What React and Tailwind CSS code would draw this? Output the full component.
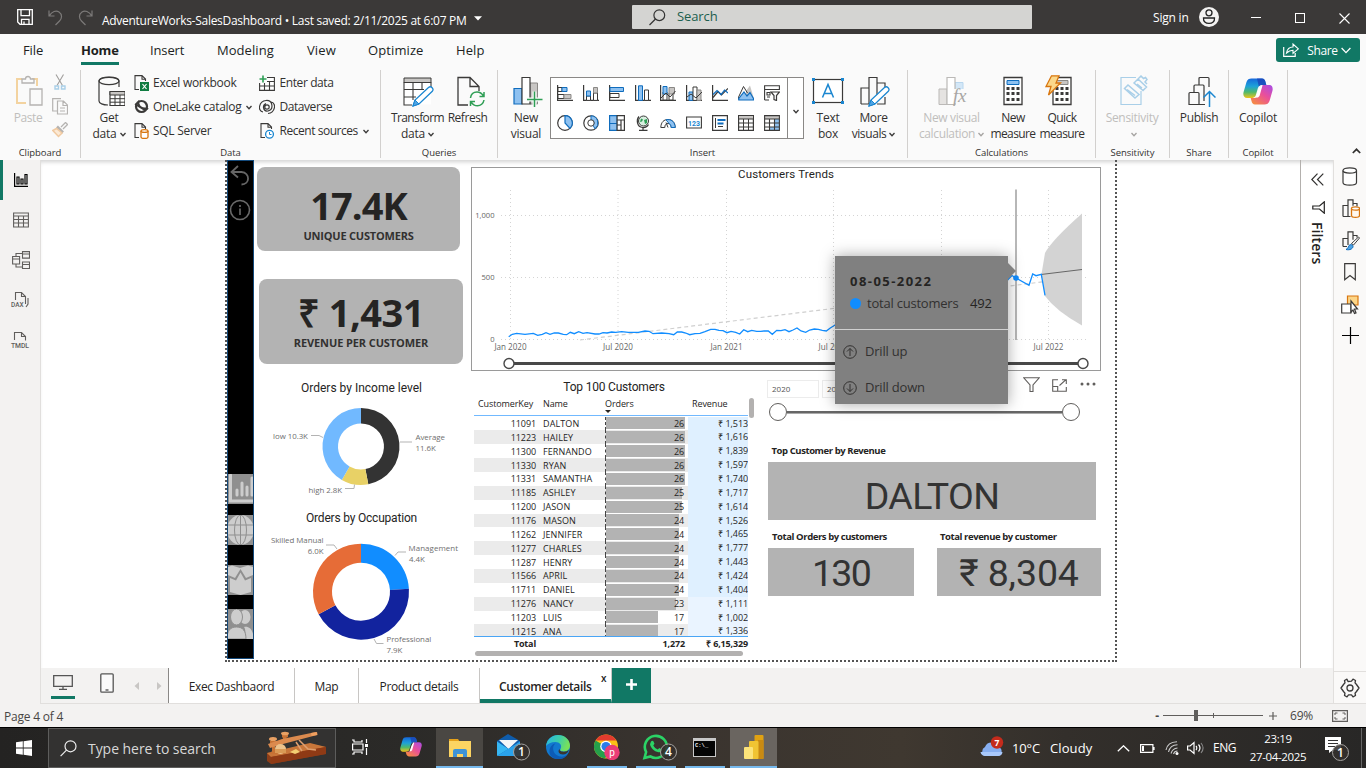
import React from "react";

const INK = "#3b3a39";
const BLUE = "#0f6cbd";
const LB = "#8ec1f0";

function Svg({ w, h, children, className = "", ...rest }) {
  return (
    <svg width={w} height={h} viewBox={`0 0 ${w} ${h}`} fill="none" className={"block shrink-0 " + className} {...rest}>
      {children}
    </svg>
  );
}

function Chev({ color = INK, w = 6, className = "" }) {
  return (
    <Svg w={w} h={5} className={"inline-block " + className}>
      <path d={`M.5 1 L${w / 2} 3.8 L${w - 0.5} 1`} stroke={color} strokeWidth="1.3" />
    </Svg>
  );
}

/* ---------- Title bar ---------- */
function TitleBar() {
  return (
    <div className="flex h-[34px] items-center bg-[#3b3938] text-white">
      <Svg w={16} h={16} className="ml-[17px]">
        <path d="M.7 .7h14.6v14.6H3L.7 13z M4 .7v6h8.5v-6 M4.5 15.3v-5h7.5v5 M7 12.5v3" stroke="#fff" strokeWidth="1.3" />
      </Svg>
      <Svg w={15} h={17} className="ml-[15px]">
        <path d="M1 1.5v5.5h5.5 M1.2 6.8C4 2.5 8 1 11 3c3.600 2.500 3 6.500 .5 9L7.500 16" stroke="#7c7a79" strokeWidth="1.2" />
      </Svg>
      <Svg w={15} h={17} className="ml-[15px]">
        <path d="M14 1.5v5.500H8.500 M13.800 6.800C11 2.500 7 1 4 3C.4 5.500 1 9.500 3.500 12L7.500 16" stroke="#7c7a79" strokeWidth="1.2" />
      </Svg>
      <span className="ml-[9px] mt-[8px] w-[366px] whitespace-nowrap text-[12px] font-medium leading-5 tracking-[-0.28px]">
        AdventureWorks-SalesDashboard&nbsp;• Last saved: 2/11/2025 at 6:07 PM
      </span>
      <Svg w={8} h={5} className="ml-[6px] mt-[2px]"><path d="M0 .3h8L4 4.600z" fill="#fff" /></Svg>
      <div className="ml-[150px] flex h-6 w-[400px] items-center rounded-[1px] bg-[#d4d4d2]">
        <Svg w={17} h={17} className="ml-[17px]">
          <circle cx="10.300" cy="6.200" r="5.400" stroke="#333" strokeWidth="1.200" />
          <path d="M6.500 10 .5 16" stroke="#333" strokeWidth="1.200" />
        </Svg>
        <span className="ml-[11px] text-[13px] tracking-[-0.1px] text-[#1b5e4e]">Search</span>
      </div>
      <span className="ml-[121px] mt-[2px] w-[46px] whitespace-nowrap text-[12px] tracking-[-0.2px]">Sign in</span>
      <Svg w={20} h={20}>
        <circle cx="10" cy="10" r="10" fill="#f3f2f1" />
        <circle cx="10" cy="5.800" r="3" stroke="#222" strokeWidth="1.300" />
        <path d="M4.500 11h11c.3 3.500-2 5.300-5.500 5.300S4.200 14.500 4.500 11z" stroke="#222" strokeWidth="1.300" />
      </Svg>
      <Svg w={10} h={12} className="ml-[32px]"><path d="M0 6.500h10" stroke="#fff" /></Svg>
      <Svg w={10} h={10} className="ml-[34px] mt-[2px]"><rect x=".5" y=".5" width="9" height="9" stroke="#fff" /></Svg>
      <Svg w={11} h={11} className="ml-[34px] mt-[2px]"><path d="M.5 .5l10 10M10.500 .5l-10 10" stroke="#fff" strokeWidth="1.100" /></Svg>
    </div>
  );
}

/* ---------- Ribbon tabs ---------- */
function RibbonTabs() {
  const cls = "h-8 shrink-0 leading-8";
  return (
    <div className="flex h-8 items-start bg-[#fafafa] pl-[23px] text-[13px] tracking-[-0.12px] text-[#201f1e]">
      <div className={cls + " w-[58px]"}>File</div>
      <div className={cls + " w-[69px]"}>
        <div className="h-[31px] w-[38px] border-b-[3px] border-[#117865] font-bold tracking-[-0.2px]">Home</div>
      </div>
      <div className={cls + " w-[67px]"}>Insert</div>
      <div className={cls + " w-[90px] tracking-[0.05px]"}>Modeling</div>
      <div className={cls + " w-[61px] tracking-[0.1px]"}>View</div>
      <div className={cls + " w-[88px] tracking-[0.1px]"}>Optimize</div>
      <div className={cls + " tracking-[0.1px]"}>Help</div>
      <button className="ml-auto mr-[6px] mt-[4px] flex h-6 w-[84px] items-center rounded-[3px] bg-[#117865] text-white">
        <Svg w={16} h={14} className="ml-[7px]">
          <path d="M.7 4v9.300h11.500V10" stroke="#fff" strokeWidth="1.200" />
          <path d="M3.500 10C4.200 6 7 4 10 4V1l5.300 4.800L10 10.300V7.200C7.500 7.200 5.500 8 3.500 10z" stroke="#fff" strokeWidth="1.100" />
        </Svg>
        <span className="ml-[8px] mt-px w-[31px] text-[12px] font-medium tracking-[-0.38px]">Share</span>
        <Svg w={10} h={7} className="ml-[3px]"><path d="M.6 1 5 5.600 9.400 1" stroke="#fff" strokeWidth="1.300" /></Svg>
      </button>
    </div>
  );
}

/* ---------- Ribbon icons ---------- */
const PasteIcon = () => (
  <Svg w={30} h={32} className="ml-[2px]">
    <path d="M12 28H3V4h5 M18 4h5v7" stroke="#f3d3a0" strokeWidth="2" />
    <path d="M8 8h12V4h-3.500a2.500 2.500 0 0 0-5 0H8z M16 14h12v16H16z" stroke="#b5b3b1" strokeWidth="1.300" fill="#fafafa" />
  </Svg>
);
const GetDataIcon = () => (
  <Svg w={28} h={32} className="ml-[3px]">
    <path d="M22 12V6c0-2.500-4.500-4-10-4S2 3.500 2 6v20c0 2.300 4 4 9 4" stroke={INK} strokeWidth="1.200" />
    <ellipse cx="12" cy="6" rx="10" ry="3.700" stroke={INK} strokeWidth="1.200" />
    <path d="M13 16.500h15v14H13z" fill="#fff" stroke={INK} strokeWidth="1.200" />
    <path d="M13 16.500h15v3.500H13z" fill="#c8c6c4" stroke={INK} />
    <path d="M13 23.700h15M13 27.200h15M18 20v10.500M23 20v10.500" stroke={INK} />
  </Svg>
);
const Pencil = ({ x = 0, y = 0 }) => (
  <g transform={`translate(${x} ${y})`}>
    <path d="M1 20l2-6L16.500 1.500a2.700 2.700 0 0 1 3.800 3.800L7 18z" fill="#fff" stroke="#1a86d0" strokeWidth="1.300" />
    <path d="M1 20l2-6 4 4z" fill="#50a5e6" stroke="#1a86d0" />
  </g>
);
const TransformIcon = () => (
  <Svg w={32} h={32} className="ml-[3px]">
    <path d="M1 2.500h27v27H1z" fill="#fff" />
    <path d="M1 3h27v4.500H1z" fill="#c8c6c4" stroke={INK} />
    <path d="M1 7v23h8 M28 7v5 M1 14.500h20M1 22h12M10 7v18M19 7v8" stroke={INK} strokeWidth="1.100" />
    <Pencil x={9} y={11} />
  </Svg>
);
const RefreshIcon = () => (
  <Svg w={28} h={32} className="ml-[6px]">
    <path d="M11 30H1V2.500h12l9 9V16 M13 2.500V11.500h9" stroke={INK} strokeWidth="1.300" fill="none" />
    <path d="M13.500 23c.5-4 3-6 6.500-6 3 0 5 1.500 6.500 4 M27 17v4.500h-4.500 M27 25c-.5 3.500-3.500 5.800-6.500 5.800-3 0-5-1.500-6.500-4 M13.500 31v-4.500H18" stroke="#2f9e55" strokeWidth="1.500" />
  </Svg>
);
const NewVisualIcon = () => (
  <Svg w={30} h={32} className="ml-[3px]">
    <path d="M1 13.500h8V29H1z" fill={LB} stroke={BLUE} strokeWidth="1.200" />
    <path d="M17 8h7.500v21H17z" fill="#c8c6c4" stroke="#8a8886" />
    <path d="M9 2.500h8V29H9z" fill="#fff" stroke={INK} strokeWidth="1.200" />
    <path d="M21.500 16.500v15.500M13.500 24.500h16" stroke="#fafafa" strokeWidth="4" />
    <path d="M14 24.500h15.500M21.500 16.500v15.500" stroke="#2f9e55" strokeWidth="1.500" />
  </Svg>
);
const TextBoxIcon = () => (
  <Svg w={32} h={32}>
    <rect x="1.500" y="4.500" width="29" height="23" fill="#fff" stroke={INK} strokeWidth="1.200" />
    <path d="M0 3h3v3H0zM29 3h3v3h-3zM0 26h3v3H0zM29 26h3v3h-3z" fill="#1a86d0" />
    <path d="M10.500 22.500 16 9.500l5.500 13M12.500 18.500h7" stroke="#1a86d0" strokeWidth="1.500" />
  </Svg>
);
const MoreVisualsIcon = () => (
  <Svg w={30} h={32} className="ml-[3px]">
    <path d="M1 29V13h8M9 29V2.500h8V20M1 29h8M17 8h8v4M25 22v7h-8" stroke={INK} strokeWidth="1.200" />
    <Pencil x={8} y={11} />
  </Svg>
);
const CalcFxIcon = () => (
  <Svg w={30} h={32} className="ml-[3px]">
    <path d="M17 7.500h8V18h-8z" fill="#d3e7f7" stroke="#b8d6ee" />
    <path d="M1 14h8v15.500H1z" fill="#e5e3e1" stroke="#bbb9b7" />
    <path d="M9 2.500h8v27H9z" fill="#fff" stroke="#bbb9b7" strokeWidth="1.200" />
    <path d="M15.500 14h13v14h-13z" fill="#fafafa" />
    <text x="15" y="27" fontFamily="Liberation Serif, serif" fontStyle="italic" fontSize="19" fill="#a8a6a4">fx</text>
  </Svg>
);
const CalcBody = ({ fill, stroke }) => (
  <>
    <path d="M1 2.500h18v27H1z" fill="#fff" stroke={INK} strokeWidth="1.300" />
    <path d="M4 5.500h12v4H4z" fill={fill} stroke={stroke} />
    <path d="M3.500 13.500h3M8.500 13.500h3M13.500 13.500h3M3.500 18.500h3M8.500 18.500h3M13.500 18.500h3M3.500 24.500h3M8.500 24.500h3M13.500 24.500h3" stroke={INK} strokeWidth="3" />
  </>
);
const MeasureIcon = () => <Svg w={20} h={32} className="-ml-[1px]"><CalcBody fill={LB} stroke={BLUE} /></Svg>;
const QuickIcon = () => (
  <Svg w={30} h={32} className="-ml-[6px]">
    <g transform="translate(8 0)"><CalcBody fill="#c8c6c4" stroke="#8a8886" /></g>
    <path d="M7.500 .8h7.500L12 8h4.500L4.500 20l2.500-8.500H2z" fill="#fbd88a" stroke="#d8750e" strokeWidth="1.300" />
  </Svg>
);
const SensitivityIcon = () => (
  <Svg w={28} h={32} className="ml-[4px]">
    <path d="M16 2.500H1v27h20V16" stroke="#a9cfe8" strokeWidth="1.200" />
    <path d="M4.500 13.500l3.500-3.500 11 9.500-4 3.500z M7 14.500l8 6" stroke="#a9cfe8" strokeWidth="1.500" />
    <path d="M14 8l4-4 8.500 8-3.500 3.500z M18 4l3-3 2.500 2.500 2-1 1.500 2-2 2.500 2 2M17 9l5 4" stroke="#a9cfe8" strokeWidth="1.500" />
  </Svg>
);
const PublishIcon = () => (
  <Svg w={28} h={32} className="ml-[6px]">
    <path d="M1 29.500V18.500q0-1 1-1h8q1 0 1 1v11z M6 17.500V11q0-1 1-1h4 M11 29.500h6 M16 26V11q0-1-1-1h-4V3.500q0-1 1-1h8q1 0 1 1V12" stroke={INK} strokeWidth="1.200" />
    <path d="M21.500 32V16.500M15.500 22.500l6-6 6 6" stroke="#1a86d0" strokeWidth="1.500" />
  </Svg>
);
function CopilotIcon({ size = 30, id }) {
  return (
    <svg width={size} height={size * 0.9} viewBox="0 0 30 27" className="block">
      <defs>
        <linearGradient id={id + "a"} x1="0" y1="0" x2="0" y2="1">
          <stop offset="0" stopColor="#1668dc" /><stop offset=".4" stopColor="#1da2d8" /><stop offset=".7" stopColor="#4fb96c" /><stop offset="1" stopColor="#f0c419" />
        </linearGradient>
        <linearGradient id={id + "b"} x1="1" y1="0" x2=".2" y2="1">
          <stop offset="0" stopColor="#a64de8" /><stop offset=".5" stopColor="#ea4f9a" /><stop offset="1" stopColor="#f58a45" />
        </linearGradient>
      </defs>
      <path d="M8.500 .5h10.500c2 0 3 1.500 3.500 3.500l.8 3H19c-3 0-3.700 2-4.500 4.500l-1.800 6C12 19.500 10 20 8 20H4c-3 0-4.300-2.500-3.400-6L3.500 4C4.300 1.500 6 .5 8.500 .5z" fill={`url(#${id}a)`} />
      <path d="M21.500 26.500H12c-2 0-3-1.500-3.500-3.500L7.700 20H11c3 0 3.700-2 4.500-4.500l1.800-6C18 7.500 19.500 7 22 7h4c3 0 4.300 2.500 3.400 6L26.500 23c-.8 2.500-2.500 3.500-5 3.500z" fill={`url(#${id}b)`} />
      <path d="M14 .5h5c2 0 3 1.500 3.500 3.500l.8 3H19c-1.500 0-2.500 .6-3.200 1.600z" fill="#1a45b8" opacity=".8" />
      <path d="M16 11l2-3.500h1.500L16.500 18l-1.500 1.500h-2z" fill="#fff" />
    </svg>
  );
}

function Big({ className, icon, a, b, chev, disabled }) {
  return (
    <div className={"flex shrink-0 flex-col items-center whitespace-nowrap text-[12px] leading-4 " + (disabled ? "text-[#c0bebc] " : "text-[#323130] ") + className}>
      <div className="mt-[5px] flex h-8 items-center">{icon}</div>
      <div className="mt-[3px]">{a}</div>
      <div className="flex h-4 items-center">{b}{chev && <Chev className="ml-[3px] mt-px" color={disabled ? "#a5a3a1" : INK} />}</div>
    </div>
  );
}
function Group({ className, label, children }) {
  return (
    <div className={"flex h-[88px] shrink-0 flex-col border-r border-[#d2d0ce] " + className}>
      <div className="flex h-[79px] items-start">{children}</div>
      <div className="whitespace-nowrap text-center text-[9.500px] leading-[10px] tracking-[-0.05px] text-[#323130]">{label}</div>
    </div>
  );
}
function Row({ icon, children, chev, className = "tracking-[-0.28px]" }) {
  return (
    <div className={"flex h-6 items-center whitespace-nowrap text-[12px] text-[#323130] " + className}>
      <div className="mr-[3px] flex w-4 justify-center">{icon}</div>
      {children}
      {chev && <Chev className="ml-[5px] mt-px" />}
    </div>
  );
}
const Doc = () => <path d="M5 14.500H1V.6h7l3.500 3.500V6 M8 .6V4.300h3.500" stroke={INK} strokeWidth="1.100" />;
const Grid3 = () => <path d="M.6 2.500h14.800v12.900H.6zM.6 6.500h14.800M.6 11h14.800M5.500 6v9.500M10.500 6v9.500" stroke={INK} strokeWidth="1.100" fill="#fff" />;

/* ---------- Visual gallery ---------- */
const axis = <path d="M.6 0v15.400H16" stroke={INK} strokeWidth="1.200" />;
const G = [
  <>{axis}<path d="M1 2.500h4v4H1zM1 9.500h6v4H1z" stroke={INK} fill="#fff" /><path d="M5 2.500h5v4H5z" fill={LB} stroke={BLUE} /><path d="M7 9.500h7v4H7z" fill="#c8c6c4" stroke="#8a8886" /></>,
  <>{axis}<path d="M3.500 11h4v4.400h-4zM10.500 8h4v7.400h-4z" stroke={INK} fill="#fff" /><path d="M3.500 6h4v5h-4z" fill={LB} stroke={BLUE} /><path d="M10.500 2.500h4V8h-4z" fill="#c8c6c4" stroke="#8a8886" /></>,
  <>{axis}<path d="M1 2.500h13.500v4H1z" fill={LB} stroke={BLUE} /><path d="M1 8.500h9v4H1z" fill="#fff" stroke={INK} /></>,
  <>{axis}<path d="M3.500 .8h4v14.600h-4z" fill={LB} stroke={BLUE} /><path d="M9.500 5h4v10.400h-4z" fill="#fff" stroke={INK} /></>,
  <>{axis}<path d="M3 7h4v8H3zM9 8h4v7H9z" stroke={INK} fill="#fff" /><path d="M3 1.500h4V9H3z" fill={LB} stroke={BLUE} /><path d="M9 2.500h5.500V9H9z" fill="#c8c6c4" stroke="#8a8886" /><path d="M1 13l5-5 4 4 5.500-6" stroke={INK} /></>,
  <>{axis}<path d="M3 7h4v8.400H3z" fill={LB} stroke={BLUE} /><path d="M7 2h4v13.400H7z" fill="#fff" stroke={INK} /><path d="M11 5h4v10.400h-4z" fill="#c8c6c4" stroke="#8a8886" /><path d="M1 12l4-3 5 4 6-6" stroke={INK} /></>,
  <>{axis}<path d="M1 12.500l5-6 3.500 3.500L16 3.500" stroke={INK} strokeWidth="1.200" /><path d="M1 9.500l4-4 4 4 3.500-4.500L16 8" stroke={BLUE} strokeWidth="1.200" /></>,
  <><path d="M8 6l4-5.500L16 14H8z" fill="#c8c6c4" /><path d="M.6 14.500V12L5.500 1.500l4 6.500" stroke={INK} /><path d="M.8 15V13.500L6 7l3 4 3-3.500 3.500 6V15z" fill={LB} stroke={BLUE} strokeWidth="1.200" /></>,
  <><path d="M.6 15V.8h14.800V4.500H.6M.6 15H5M3 7.500h3v2.500H3zM3 12h3" stroke={INK} strokeWidth="1.100" /><path d="M7 7h8.500l-3 3.500v5l-2.500-1v-4z" fill="#fff" stroke={INK} strokeWidth="1.200" /></>,
  <><circle cx="8" cy="8" r="7.300" fill="#fff" stroke={INK} strokeWidth="1.200" /><path d="M8 .7V8l5 5.300A7.300 7.300 0 0 0 8 .7z" fill={LB} stroke={BLUE} strokeWidth="1.200" /></>,
  <><circle cx="8" cy="8" r="7.200" stroke={INK} strokeWidth="1.200" fill="#fff" /><path d="M8 .8a7.200 7.200 0 0 1 4 13l-2-3.500a3 3 0 0 0-2-5.300z" fill={LB} stroke={BLUE} /><circle cx="8" cy="8" r="3.200" fill="#fff" stroke={INK} /></>,
  <><path d="M.6 .6h7.500v14.800H.6z" fill={LB} stroke={BLUE} strokeWidth="1.200" /><path d="M.6 8.500h7.500" stroke={BLUE} /><path d="M8.100 .6h7.300v14.800H8.100zM8.100 5h7.300M12 5v10M8.100 10h4" fill="#fff" stroke={INK} strokeWidth="1.200" /></>,
  <><circle cx="8.500" cy="6" r="5" fill="#d8efe0" stroke={INK} /><path d="M6 3.500l2 1-1 2-2 .5zM9 5l3-1v4l-2 1z" fill="#2f9e55" /><path d="M4 1.500C1 5 2 12 7.500 12.500c3 .3 5-1 6-3M8 12.500v2.500M4 15.400h8.500" stroke={INK} strokeWidth="1.200" /></>,
  <><path d="M.8 12.500C1 7 4 4.500 8 4.500s7 2.500 7.200 8h-4c0-2.500-1-4-3.200-4s-3.200 1.500-3.200 4z" fill="#fff" stroke={INK} /><path d="M6 4.800C11 3.500 15 7 15.200 12.500h-4c0-2-1-3.500-2-3.800z" fill={LB} stroke={BLUE} /><path d="M8 12.500l-2-5" stroke={INK} /></>,
  <><path d="M.6 2h14.800v11H.6z" fill="#fff" stroke={INK} strokeWidth="1.100" /><text x="8" y="10.500" textAnchor="middle" fontSize="8" fontWeight="700" fontFamily="Roboto, sans-serif" fill="#1a86d0" textLength="12" lengthAdjust="spacingAndGlyphs">123</text></>,
  <><path d="M.6 .6h14.800v14.800H.6z" fill="#fff" stroke={INK} strokeWidth="1.200" /><path d="M3.500 3v10M6 11.500h5" stroke={INK} /><path d="M5.500 5h8M5.500 8.500h6" stroke={BLUE} strokeWidth="2" /></>,
  <><path d="M.6 .6h14.800v14.800H.6z" fill="#fff" stroke={INK} strokeWidth="1.200" /><path d="M1 1h14v3H1z" fill="#c8c6c4" /><path d="M.6 4h14.800M.6 8h14.800M.6 12h14.800M5.500 4v11M10.500 4v11" stroke={INK} /></>,
  <><path d="M.6 .6h14.800v14.800H.6z" fill="#fff" /><path d="M1 1h14v3H1z" fill="#c8c6c4" /><path d="M10.500 4h5v11.400H5.500V12h5z" fill={LB} /><path d="M.6 .6h14.800v14.800H.6zM.6 4h14.800M.6 8h14.800M.6 12h14.800M5.500 4v11M10.500 4v11" stroke={INK} strokeWidth="1.100" /></>,
];

function Ribbon() {
  return (
    <div className="flex h-[94px] items-start bg-[#fafafa] pt-1">
      <Group className="w-[81px]" label="Clipboard">
        <Big className="ml-[4px] w-[48px] tracking-[-0.4px]" icon={<PasteIcon />} a="Paste" disabled />
        <div className="flex w-4 flex-col items-center pt-[4px]">
          <Svg w={12} h={16}>
            <path d="M2 .5l6.500 11M9.500 .5 3 11.500" stroke="#a19f9d" strokeWidth="1.100" />
            <path d="M1 12h3.500v3H1zM7.500 12H11v3H7.500z" stroke="#a9cfe8" strokeWidth="1.400" />
          </Svg>
          <Svg w={16} h={17} className="mt-[8px]">
            <path d="M5 13H.7V.7H9M5.500 3h6l4 4v9h-10zM11 3v4.500h4.500M8 10h5M8 13h5" stroke="#b5b3b1" strokeWidth="1.200" />
          </Svg>
          <Svg w={16} h={16} className="mt-[7px]">
            <path d="M9 5l4.500-4.500 2 2L11 7" stroke="#b5b3b1" strokeWidth="1.300" />
            <path d="M5 4.500l6 6" stroke="#b5b3b1" strokeWidth="2.600" />
            <path d="M4.500 6.500.8 8.500l5.700 6 3.500-3.500z" stroke="#f0c9a0" strokeWidth="1.500" fill="#fbe9d5" />
          </Svg>
        </div>
      </Group>
      <Group className="w-[300px]" label="Data">
        <Big className="ml-[3px] w-[50px] tracking-[-0.22px]" icon={<GetDataIcon />} a="Get" b="data" chev />
        <div className="w-[124px] pt-px">
          <Row icon={<Svg w={16} h={16}><Doc /><path d="M6 7h9v9H6z" fill="#107c41" /><path d="M8.500 9l4 5M12.500 9l-4 5" stroke="#fff" strokeWidth="1.200" /></Svg>}>Excel workbook</Row>
          <Row chev icon={<Svg w={16} h={16}><circle cx="7.500" cy="7.500" r="5.500" stroke={INK} strokeWidth="2.200" /><path d="M1 5l8 5c2 1 4 .5 5-1M5 1.500c-2 4 1 8 8 8" stroke={INK} strokeWidth="1.600" /></Svg>}>OneLake catalog</Row>
          <Row icon={<Svg w={16} h={16}><Doc /><path d="M7 8v6c0 2 7 2 7 0V8" fill="#fff" stroke="#d8750e" strokeWidth="1.300" /><ellipse cx="10.500" cy="8" rx="3.500" ry="1.400" fill="#fff" stroke="#d8750e" strokeWidth="1.300" /></Svg>}>SQL Server</Row>
        </div>
        <div className="pl-[1px] pt-px">
          <Row className="tracking-[-0.4px]" icon={<Svg w={16} h={16}><Grid3 /><path d="M0 0h8v8H0z" fill="#fafafa" /><path d="M.5 4h7M4 .5v7" stroke="#2f9e55" strokeWidth="1.600" /></Svg>}><span className="ml-[1.500px]">Enter data</span></Row>
          <Row className="tracking-[-0.44px]" icon={<Svg w={16} h={16}><path d="M8 8m-2.200 0a2.200 2.200 0 1 0 4.400 0 2.200 2.200 0 1 0-4.400 0M4 13C-2 12 0 2 7 1.500c7-.5 8 9 2 10.500-5 1-6-6-2-7.500M12 3c6 1 4 11-3 11.500" stroke={INK} strokeWidth="1.200" /></Svg>}><span className="ml-[1.500px]">Dataverse</span></Row>
          <Row className="tracking-[-0.46px]" chev icon={<Svg w={14} h={16}><Doc /><circle cx="9.500" cy="11.300" r="3.900" fill="#fff" stroke="#1a86d0" strokeWidth="1.300" /><path d="M9.500 9v2.500h2" stroke="#1a86d0" /></Svg>}><span className="ml-[1.500px]">Recent sources</span></Row>
        </div>
      </Group>
      <Group className="w-[117px]" label="Queries">
        <Big className="ml-[6px] w-[61px] tracking-[-0.6px]" icon={<TransformIcon />} a="Transform" b={<span className="tracking-[-0.22px]">data</span>} chev />
        <Big className="w-[39px] tracking-[-0.45px]" icon={<RefreshIcon />} a="Refresh" />
      </Group>
      <Group className="w-[410px]" label="Insert">
        <Big className="ml-[4px] w-[48px] tracking-[-0.25px]" icon={<NewVisualIcon />} a="New" b="visual" />
        <div className="mt-[7px] flex h-[62px] w-[254px] shrink-0 border border-[#8a8886] bg-white">
          <div className="grid h-full w-[237px] grid-cols-9 content-between border-r border-[#8a8886] pb-[7px] pl-[1px] pr-[2px] pt-[7px]">
            {G.map((g, i) => <div key={i} className="flex justify-center"><Svg w={16} h={16}>{g}</Svg></div>)}
          </div>
          <div className="flex flex-1 items-center justify-center pt-[6px]"><Chev /></div>
        </div>
        <Big className="w-[48px] tracking-[-0.25px]" icon={<TextBoxIcon />} a="Text" b="box" />
        <Big className="w-[43px] tracking-[-0.4px]" icon={<MoreVisualsIcon />} a="More" b="visuals" chev />
      </Group>
      <Group className="w-[188px]" label="Calculations">
        <Big className="ml-[5px] w-[77px] tracking-[-0.36px]" icon={<CalcFxIcon />} a="New visual" b="calculation" chev disabled />
        <Big className="w-[46px] tracking-[-0.6px]" icon={<MeasureIcon />} a="New" b="measure" />
        <Big className="w-[52px] tracking-[-0.6px]" icon={<QuickIcon />} a="Quick" b="measure" />
      </Group>
      <Group className="w-[74px]" label="Sensitivity">
        <Big className="w-[72px] tracking-[-0.3px]" icon={<SensitivityIcon />} a="Sensitivity" chev disabled />
      </Group>
      <Group className="w-[59px]" label="Share">
        <Big className="w-[58px] tracking-[-0.4px]" icon={<PublishIcon />} a="Publish" />
      </Group>
      <Group className="w-[59px]" label="Copilot">
        <Big className="w-[58px] tracking-[-0.25px]" icon={<CopilotIcon size={30} id="cr" />} a="Copilot" />
      </Group>
      <Svg w={9} h={6} className="ml-auto mr-[5px] mt-[78px]"><path d="M.8 5 4.500 1.300 8.200 5" stroke="#323130" strokeWidth="1.700" /></Svg>
    </div>
  );
}

/* ---------- Left view switcher ---------- */
function LeftNav() {
  const c = "#605e5c";
  return (
    <div className="flex w-[41px] shrink-0 flex-col items-center border-r border-[#e1dfdd] bg-[#f3f2f1]">
      <div className="flex h-10 w-full items-center border-l-[3px] border-[#117865] pl-[11px]">
        <Svg w={14} h={14}><path d="M.6 0v13.400H14M3 4h2v7H3zM7 6h2v5H7zM11 1.500h2V11h-2z" stroke="#000" strokeWidth="1.200" /></Svg>
      </div>
      <div className="flex h-10 items-center pl-[1px]"><Svg w={16} h={16}><path d="M.6 1h14.800v14H.6zM.6 4h14.800M.6 7.500h14.800M.6 11h14.800M5.500 4v11M10.500 4v11" stroke={c} strokeWidth="1.100" /></Svg></div>
      <div className="flex h-10 items-center pl-[1px]"><Svg w={18} h={18}><path d="M.6 5.500h7v7.500h-7zM.6 8h7M10.500 .6h7v6.500h-7zM10.500 3h7M10.500 11h7v6.500h-7zM10.500 13.500h7M4 5.500v-3h6.500M4 13v3h6.500" stroke={c} strokeWidth="1.100" /></Svg></div>
      <div className="flex h-10 items-center"><Svg w={18} h={18}><path d="M4.500 9V1.500h6l4 4V13M10.500 1.500v4h4M17 7v6l-2 3" stroke={c} strokeWidth="1.100" /><text x="0" y="16" fontSize="6.500" fontFamily="Roboto" fontWeight="500" fill={c}>DAX</text></Svg></div>
      <div className="flex h-10 items-center"><Svg w={20} h={18}><path d="M4.500 9V1.500h7l4 4V9.500M11.500 1.500v4h4" stroke={c} strokeWidth="1.100" /><text x="1" y="16.500" fontSize="6.800" fontFamily="Roboto" fontWeight="500" textLength="18" fill={c}>TMDL</text></Svg></div>
    </div>
  );
}

/* ---------- Report page ---------- */
function Rail() {
  const l = "#cdcdcd";
  return (
    <div className="flex w-[27px] shrink-0 flex-col items-center border border-[#134a7c] bg-black">
      <Svg w={20} h={22} className="mr-[2px] mt-[4px]"><path d="M8 1 1.500 7 8 12.500M2 7h9.500c9 1 8.500 12.500 0 12.500" stroke="#666" strokeWidth="1.800" /></Svg>
      <Svg w={22} h={22} className="mr-[2px] mt-[12px]"><circle cx="11" cy="11" r="9.500" stroke="#6a6a6a" strokeWidth="1.600" /><path d="M11 9.500V16M11 6v2" stroke="#6a6a6a" strokeWidth="1.600" /></Svg>
      <Svg w={25} h={30} className="mt-[253px] bg-[#8f8f8f]"><path d="M2.500 1v26H25M9 21v-5M14 21V9M19 21v-8M24 21V4" stroke={l} strokeWidth="3" strokeLinecap="round" /></Svg>
      <Svg w={25} h={30} className="mt-[11px] bg-[#8f8f8f]"><ellipse cx="12.500" cy="15" rx="13.500" ry="15" fill={l} /><path d="M12.500 0v30M0 10h25M0 20h25" stroke="#8f8f8f" /><ellipse cx="12.500" cy="15" rx="6" ry="15" stroke="#8f8f8f" /></Svg>
      <Svg w={25} h={30} className="mt-[20px] bg-[#8f8f8f]"><path d="M0 2l4-1.500L12 3l8-2.500L25 2v8l-7 3-5.500-9L7 13 0 10z M2 13l6 2.500 4.500-8 4.500 8 6-2.500v14l-10.500 3L2 27z" fill={l} /></Svg>
      <Svg w={25} h={30} className="mt-[14px] bg-[#8f8f8f]"><ellipse cx="17" cy="8" rx="5.500" ry="7" fill={l} /><path d="M17 30c1-8 0-11-1-12 5-1 9 2 10 12z" fill={l} /><ellipse cx="8.500" cy="8" rx="6" ry="8" fill={l} stroke="#8f8f8f" /><path d="M-1 30c0-8 3-12 9.500-12S18 22 18 30z" fill={l} stroke="#8f8f8f" /></Svg>
    </div>
  );
}

function arc(cx, cy, r1, r0, a0, a1) {
  const p = (r, a) => `${(cx + r * Math.sin(a)).toFixed(2)} ${(cy - r * Math.cos(a)).toFixed(2)}`;
  const big = a1 - a0 > Math.PI ? 1 : 0;
  return `M${p(r1, a0)}A${r1} ${r1} 0 ${big} 1 ${p(r1, a1)}L${p(r0, a1)}A${r0} ${r0} 0 ${big} 0 ${p(r0, a0)}Z`;
}
function Donut({ cx, cy, r1, r0, data }) {
  const total = data.reduce((s, d) => s + d[0], 0);
  let a = 0;
  return data.map(([v, color]) => {
    const a0 = a;
    a += (v / total) * Math.PI * 2;
    return <path key={color} d={arc(cx, cy, r1, r0, a0, a)} fill={color} />;
  });
}

function LeftColumn() {
  const num = "text-[38px] font-bold leading-[40px] text-[#252423]";
  const cap = "text-[11px] font-bold leading-[14px] text-[#323130]";
  const title = "text-center font-[Roboto] text-[12px] leading-4 text-[#252423]";
  return (
    <div className="w-[217px] shrink-0 pt-[7px]">
      <div className="ml-[3px] flex h-[84px] w-[203px] flex-col items-center rounded-[8px] bg-[#b3b3b3] pt-[18px]">
        <div className={num + " tracking-[-1px]"}>17.4K</div>
        <div className={cap + " mt-[4px] tracking-[-0.2px]"}>UNIQUE CUSTOMERS</div>
      </div>
      <div className="ml-[5px] mt-[28px] flex h-[85px] w-[204px] flex-col items-center rounded-[8px] bg-[#b3b3b3] pt-[13px]">
        <div className={num + " tracking-[-0.5px]"}>₹ 1,431</div>
        <div className={cap + " mt-[4px] tracking-[-0.1px]"}>REVENUE PER CUSTOMER</div>
      </div>
      <div className={title + " mt-[16px] w-[215px] tracking-[0px]"}>Orders by Income level</div>
      <svg width="217" height="110" viewBox="254 396 217 110" className="block" fontFamily="Open Sans" fontSize="7.900" fill="#6f6f6f" letterSpacing="-0.050">
        <Donut cx={361} cy={446.500} r1={38.500} r0={23} data={[[11.6, "#333333"], [2.8, "#e8d166"], [10.3, "#71b9ff"]]} />
        <g stroke="#b3b3b3" fill="none"><path d="M311 435.500h8l4 2M400 442h12M345 488.500h9l.5-4" /></g>
        <text x="273" y="438.500">low 10.3K</text>
        <text x="415.500" y="440">Average</text>
        <text x="415.500" y="451">11.6K</text>
        <text x="308.500" y="493">high 2.8K</text>
      </svg>
      <div className={title + " mt-[4px] w-[215px] tracking-[-0.200px]"}>Orders by Occupation</div>
      <svg width="217" height="131" viewBox="254 526 217 131" className="block" fontFamily="Open Sans" fontSize="7.900" fill="#6f6f6f" letterSpacing="-0.050">
        <Donut cx={361} cy={591.700} r1={48} r0={29} data={[[4.4, "#118dff"], [7.9, "#12239e"], [6.0, "#e66c37"]]} />
        <g stroke="#b3b3b3" fill="none"><path d="M326 545h8l3 4M395 555.500l3-3.500h8M374 639l2.500 4.500h7" /></g>
        <text x="323.500" y="543" textAnchor="end">Skilled Manual</text>
        <text x="323.500" y="554" textAnchor="end">6.0K</text>
        <text x="408.500" y="551" letterSpacing="0.080">Management</text>
        <text x="409" y="562">4.4K</text>
        <text x="386.500" y="642">Professional</text>
        <text x="386.500" y="653">7.9K</text>
      </svg>
    </div>
  );
}

const LINE = [
  [508.700, 336.700], [512.300, 334.300], [516.700, 333.300], [525, 334.300], [533.300, 333.300], [537.700, 335.300], [542.300, 334.300], [546, 332.700], [550, 334.300], [554.300, 333], [558.300, 333], [563.300, 334.300], [566.700, 334.700], [570.300, 332.300], [574.300, 333.700], [578.700, 331.700], [583, 333.300], [587, 332.700], [595, 334], [599, 334], [603, 332.700], [607, 333], [611.700, 332], [615.700, 332.300], [621.700, 331.700], [628.300, 332.300], [638.300, 332.300], [645, 331], [649, 331.300], [653, 333.700], [661.700, 333], [669, 333.700], [673.700, 334.700], [677.300, 332], [681.700, 332], [685.700, 333], [689.700, 334.700], [695, 333.700], [700, 333.300], [705, 331.700], [710.700, 329.300], [715, 329.300], [719, 330.300], [723, 330.700], [727, 332.700], [731, 331.300], [735.700, 332.300], [739.700, 334], [743.700, 329.700], [747.700, 331.700], [751.700, 330.300], [756.700, 331.300], [760.700, 331.300], [764.300, 331], [768.300, 331], [772.300, 334.300], [776.700, 330.300], [781, 330.700], [785, 329.700], [789, 331.700], [793, 330], [797, 328], [801, 331], [805.700, 332.300], [809.700, 330], [814.300, 329], [818.300, 329.300], [822.300, 330.300], [826.300, 331], [830.300, 328], [835, 325], [1000, 290], [1008, 279.500], [1012, 275.500], [1016, 278], [1029, 285.300], [1032.700, 274], [1036, 275.700], [1041.300, 274.400], [1045, 295.300],
];

function TrendChart() {
  return (
    <svg width="630" height="204" viewBox="471 167 630 204" className="block" fill="none">
      <rect x="471.500" y="167.500" width="629" height="203" stroke="#9a9a9a" fill="#fff" />
      <text x="786" y="178" textAnchor="middle" fontFamily="Roboto" fontSize="11.500" fill="#252423" textLength="96">Customers Trends</text>
      <g stroke="#d4d4d4" strokeDasharray="1 3">
        <path d="M510.500 190v150M618 190v150M726.500 190v150M833.500 190v150M941.500 190v150M1048.500 190v150M501 215.500h588M501 277.500h588M501 339.500h588" />
      </g>
      <path d="M1041.500 274 1045 253Q1052 240 1082 213.500V325.500Q1056 311 1045 296z" fill="#d3d3d3" />
      <path d="M1041 274.500 1082 269.500" stroke="#666" />
      <path d="M580 340 833 308.500 1045 281.500" stroke="#cfcfcf" strokeDasharray="4 3" strokeWidth="1.200" />
      <path d="M1016 189.500V340" stroke="#ababab" strokeWidth="1.700" />
      <polyline points={LINE.map((p) => p.join(",")).join(" ")} stroke="#118dff" strokeWidth="1.300" />
      <circle cx="1016" cy="278" r="2.800" fill="#118dff" />
      <g fontFamily="Open Sans" fontSize="7.600" fill="#666" textAnchor="end">
        <text x="494.500" y="218.300">1,000</text><text x="494.500" y="280.300">500</text><text x="494.500" y="342.300">0</text>
      </g>
      <g fontFamily="Open Sans" fontSize="8.100" fill="#666" textAnchor="middle">
        <text x="510.500" y="350">Jan 2020</text><text x="618" y="350">Jul 2020</text><text x="726.500" y="350">Jan 2021</text><text x="833.500" y="350">Jul 2021</text><text x="1048.500" y="350">Jul 2022</text>
      </g>
      <path d="M509 363.500h574" stroke="#484848" strokeWidth="2.800" />
      <circle cx="509" cy="363.500" r="5" fill="#fff" stroke="#484848" strokeWidth="1.400" />
      <circle cx="1083" cy="363.500" r="5" fill="#fff" stroke="#484848" strokeWidth="1.400" />
    </svg>
  );
}

const ROWS = [
  ["11091", "DALTON", 26, "1,513"], ["11223", "HAILEY", 26, "1,616"], ["11300", "FERNANDO", 26, "1,839"], ["11330", "RYAN", 26, "1,597"],
  ["11331", "SAMANTHA", 26, "1,740"], ["11185", "ASHLEY", 25, "1,717"], ["11200", "JASON", 25, "1,614"], ["11176", "MASON", 24, "1,526"],
  ["11262", "JENNIFER", 24, "1,465"], ["11277", "CHARLES", 24, "1,777"], ["11287", "HENRY", 24, "1,443"], ["11566", "APRIL", 24, "1,424"],
  ["11711", "DANIEL", 24, "1,404"], ["11276", "NANCY", 23, "1,111"], ["11203", "LUIS", 17, "1,002"], ["11215", "ANA", 17, "1,336"],
];

function CustomerTable() {
  return (
    <div className="ml-[3px] w-[281px] shrink-0 pt-[8px] text-[#252423]">
      <div className="w-[280px] pt-px text-center font-[Roboto] text-[12px] leading-[15px] tracking-[-0.200px]">Top 100 Customers</div>
      <div className="flex">
        <div className="w-[274px]">
          <div className="flex h-[21px] border-b border-[#71b9ff] pt-[3px] text-[9px] leading-[12px] tracking-[-0.1px]">
            <div className="w-[69px] pl-[4px]">CustomerKey</div>
            <div className="w-[62px]">Name</div>
            <div className="w-[87px]">
              Orders
              <svg width="6" height="3" viewBox="0 0 6 3" className="block"><path d="M0 0h6L3 3z" fill="#252423" /></svg>
            </div>
            <div>Revenue</div>
          </div>
          <div className="h-[220px] overflow-hidden pt-[0.500px]">
            {ROWS.map(([k, n, o, r], i) => (
              <div key={k} className={"flex h-[13.870px] items-center text-[9px] leading-[13px] tracking-[-0.100px] " + (i % 2 ? "bg-[#ebebeb]" : "bg-white")}>
                <div className="w-[62px] text-right">{k}</div>
                <div className="w-[69px] pl-[7px] tracking-[0.100px]">{n}</div>
                <div className="flex h-full w-[80px] items-center border-l border-dashed border-[#444]">
                  <div className="h-[12px] bg-[#b3b3b3]" style={{ width: (o / 26) * 79 }} />
                </div>
                <div className="-ml-[20px] w-[20px] pr-px text-right">{o}</div>
                <div className={"ml-[3px] h-full flex-1 text-right " + (r < "1,400" ? "bg-[#eaf4ff]" : "bg-[#dff0ff]")}>₹ {r}</div>
              </div>
            ))}
          </div>
          <div className="flex h-[15px] items-center border-t border-[#4aa5f5] text-[9px] font-bold tracking-[-0.150px]">
            <div className="w-[62px] text-right">Total</div>
            <div className="w-[149px] text-right">1,272</div>
            <div className="flex-1 text-right">₹ 6,15,329</div>
          </div>
          <div className="ml-px h-[5px] w-[268px] rounded-full bg-[#b3b1b0]" />
        </div>
        <div className="ml-px mt-[3px] h-[20px] w-[5px] rounded-full bg-[#b3b1b0]" />
      </div>
    </div>
  );
}

function RightColumn() {
  const lab = "text-[9.500px] font-bold leading-[12px] tracking-[-0.420px] text-[#252423] whitespace-nowrap";
  const big = "flex items-end justify-center bg-[#b3b3b3] font-[Roboto] text-[37.500px] leading-[46px] text-[#333]";
  return (
    <div className="ml-[12px] w-[350px] shrink-0">
      <div className="flex h-[27px] items-start pt-[9px]">
        <div className="h-[18px] w-[52px] border border-[#ececec] pl-[4px] text-[8px] leading-4 text-[#555]">2020</div>
        <div className="ml-[3px] h-[18px] w-[52px] border border-[#ececec] pl-[4px] text-[8px] leading-4 text-[#555]">2022</div>
        <Svg w={17} h={15} className="-mt-[3px] ml-[149px]"><path d="M.8 .8h15.400L10 8v6.500H7V8z" stroke="#605e5c" strokeWidth="1.100" /></Svg>
        <Svg w={15} h={13} className="-mt-[1px] ml-[12px]"><path d="M6 .7H.7v11.600h13.600V8M.7 7.500h5v5M7.500 6.500 14 .7M10 .7h4.300V5" stroke="#605e5c" strokeWidth="1.100" /></Svg>
        <Svg w={16} h={4} className="mt-[2px] ml-[13px]"><circle cx="2" cy="2" r="1.500" fill="#605e5c" /><circle cx="8" cy="2" r="1.500" fill="#605e5c" /><circle cx="14" cy="2" r="1.500" fill="#605e5c" /></Svg>
      </div>
      <div className="flex h-[28px] items-center">
        <div className="ml-[1.500px] size-[18px] rounded-full border-[1.500px] border-[#605e5c] bg-white" />
        <div className="h-[3px] w-[275px] border-b border-[#aaa] bg-[#666]" />
        <div className="size-[18px] rounded-full border-[1.500px] border-[#605e5c] bg-white" />
      </div>
      <div className={lab + " ml-[4.500px] mt-[19px]"}>Top Customer by Revenue</div>
      <div className={big + " ml-px mt-[5px] h-[58px] w-[328px] pb-px tracking-[-0.600px]"}>DALTON</div>
      <div className="flex">
        <div className="w-[170px]">
          <div className={lab + " ml-[5px] mt-[11px]"}>Total Orders by customers</div>
          <div className={big + " ml-px mt-[5px] h-[48px] w-[146px] tracking-[-1.800px]"}>130</div>
        </div>
        <div>
          <div className={lab + " ml-[3px] mt-[11px]"}>Total revenue by customer</div>
          <div className={big + " mt-[5px] h-[48px] w-[164px] tracking-[-0.100px]"}>₹ 8,304</div>
        </div>
      </div>
    </div>
  );
}

function Tooltip() {
  return (
    <div className="absolute left-[608px] top-[96px] h-[148px] w-[173px] bg-[#808080] text-[13px] text-[#323130] shadow-[0_0_14px_rgba(0,0,0,0.35)]">
      <div className="absolute left-full top-[7px]"><svg width="8" height="16" className="block"><path d="M0 0l8 8-8 8z" fill="#808080" /></svg></div>
      <div className="h-[74px] border-b border-[#d0d0d0] pl-[15px] pt-[16px]">
        <div className="font-bold leading-[18px] tracking-[1.450px] text-[#252423]">08-05-2022</div>
        <div className="flex items-center pt-[4px] leading-[18px]">
          <div className="size-[11px] rounded-full bg-[#118dff]" />
          <span className="ml-[6px] w-[103px] whitespace-nowrap tracking-[-0.220px]">total customers</span>
          <span className="tracking-[-0.200px] text-[#252423]">492</span>
        </div>
      </div>
      <div className="flex h-[42px] items-center pl-[8px] pt-px tracking-[-0.200px]">
        <Svg w={14} h={14}><circle cx="7" cy="7" r="6.300" stroke="#323130" /><path d="M7 11V3.500M4 6.500l3-3 3 3" stroke="#323130" /></Svg>
        <span className="ml-[8px]">Drill up</span>
      </div>
      <div className="flex h-[31px] items-center pl-[8px] tracking-[-0.200px]">
        <Svg w={14} h={14}><circle cx="7" cy="7" r="6.300" stroke="#323130" /><path d="M7 3v7.500M4 7.500l3 3 3-3" stroke="#323130" /></Svg>
        <span className="ml-[8px]">Drill down</span>
      </div>
    </div>
  );
}

function Report() {
  return (
    <div className="flex h-[508px] bg-white pl-[184px] shadow-[inset_0_4px_4px_-2px_rgba(0,0,0,0.18)]">
      <div className="relative flex h-[502px] w-[892px] items-start border-b-2 border-l-2 border-r-2 border-dotted border-[#555]">
        <div className="flex h-[499px]"><Rail /></div>
        <LeftColumn />
        <div className="pt-[7px]">
          <TrendChart />
          <div className="flex items-start">
            <CustomerTable />
            <RightColumn />
          </div>
        </div>
        <Tooltip />
      </div>
      <div className="ml-auto flex w-[33px] flex-col items-center border-l border-[#b3b0ad]">
        <Svg w={13} h={13} className="mt-[13px]"><path d="M6.500 .7.8 6.500l5.700 5.800M12.300 .7 6.500 6.500l5.800 5.800" stroke="#323130" strokeWidth="1.200" /></Svg>
        <Svg w={13} h={13} className="ml-[2px] mt-[15px]"><path d="M12.300 .8v11.400L7.500 8H.8V5h6.700z" stroke="#252423" strokeWidth="1.200" /></Svg>
        <span className="mt-[8px] block text-[14px] font-semibold leading-4 tracking-[0.100px] text-[#252423] [writing-mode:vertical-rl]">Filters</span>
      </div>
    </div>
  );
}

function PageTabs() {
  const tab = "flex h-[35px] items-center justify-center border-r border-[#c8c6c4] bg-white pt-[3px] text-[12px] tracking-[-0.340px] text-[#252423] whitespace-nowrap";
  return (
    <div className="flex h-[36px] border-b border-[#e1dfdd] bg-[#f3f2f1]">
      <div className="flex w-[128px] items-start border-r border-[#8a8886]">
        <div className="ml-[10px] mt-[7px] flex h-[24px] w-[24px] flex-col items-center justify-between border-b-[3px] border-[#117865]">
          <Svg w={20} h={15} className="mr-px"><path d="M.7 .7h18.600v10.600H.7zM10 11.500v2.500M6 14.300h8" stroke="#555" strokeWidth="1.300" /></Svg>
        </div>
        <Svg w={14} h={20} className="ml-[25px] mt-[5px]"><rect x=".8" y=".8" width="12.400" height="18.400" rx="1" stroke="#555" strokeWidth="1.300" fill="#fafafa" /><path d="M5.500 17h3" stroke="#555" strokeWidth="1.400" /></Svg>
        <Svg w={5} h={8} className="ml-[20px] mt-[14px]"><path d="M5 0v8L.5 4z" fill="#c8c6c4" /></Svg>
        <Svg w={5} h={8} className="ml-[18px] mt-[14px]"><path d="M0 0v8l4.500-4z" fill="#c8c6c4" /></Svg>
      </div>
      <div className={tab + " w-[126px]"}>Exec Dashbaord</div>
      <div className={tab + " w-[64px]"}>Map</div>
      <div className={tab + " w-[121px]"}>Product details</div>
      <div className="flex h-[35px] w-[132px] border-b-4 border-r border-b-[#117865] border-r-[#c8c6c4] bg-white pl-[19px] pt-[7px] text-[12px] font-semibold tracking-[-0.380px] text-[#252423]">
        <span className="w-[102px] whitespace-nowrap pt-[3px]">Customer details</span>
        <span className="-mt-[3px] text-[10px] font-semibold leading-3">x</span>
      </div>
      <div className="flex h-[35px] w-[39px] items-center justify-center bg-[#117865]"><Svg w={11} h={11} className="-mt-[2px]"><path d="M5.500 0v11M0 5.500h11" stroke="#fff" strokeWidth="2.600" /></Svg></div>
    </div>
  );
}

function RightPanes() {
  return (
    <div className="flex w-[33px] shrink-0 flex-col items-center border-l border-[#e1dfdd] bg-[#faf9f8]">
      <Svg w={16} h={19} className="mt-[7px]"><path d="M1 3.500v12c0 3.500 13.500 3.500 13.500 0v-12" stroke={INK} strokeWidth="1.200" fill="#fff" /><ellipse cx="7.750" cy="3.500" rx="6.750" ry="2.600" stroke={INK} strokeWidth="1.200" fill="#fff" /></Svg>
      <Svg w={18} h={20} className="ml-px mt-[13px]"><path d="M1 17.500V6.500h5M6 17.500V.8h5v6M11 4.500h4v3M1 17.500h7.500" stroke={INK} strokeWidth="1.200" /><path d="M9.500 9.500v7c0 2.500 8 2.500 8 0v-7" fill="#fff8ef" stroke="#d8750e" strokeWidth="1.300" /><ellipse cx="13.500" cy="9.500" rx="4" ry="1.600" fill="#fff" stroke="#d8750e" strokeWidth="1.300" /></Svg>
      <Svg w={18} h={20} className="ml-px mt-[12px]"><path d="M1 15.500V7.500h5M1 15.500h4M6 14V.8h5v8M11 4.500h4v2" stroke={INK} strokeWidth="1.200" /><path d="M9.500 12.500 16.500 6l1 1-6 7z" stroke={INK} fill="#fff" /><path d="M4 18.500c2-1 2-2 3-4 1-1.500 4-1 4 1s-3 4-7 3z" fill="#50a5e6" stroke={BLUE} /></Svg>
      <Svg w={12} h={18} className="mt-[12px]"><path d="M.7 .7h10.600v16L6 12.500.7 16.700z" stroke={INK} strokeWidth="1.200" /></Svg>
      <Svg w={18} h={20} className="mt-[14px]"><path d="M6.500 1H17v9H6.500z" fill="#fcd587" stroke="#d8750e" strokeWidth="1.200" /><path d="M.7 9H10v9H.7z" fill="#fff" stroke={INK} strokeWidth="1.200" /><path d="M10 6l6.500 8h-3l1.500 4-1.500 .5-1.500-3.500-2 2z" fill="#fff" stroke={INK} strokeWidth="1.200" /></Svg>
      <Svg w={17} h={17} className="mt-[12px]"><path d="M8.500 0v17M0 8.500h17" stroke="#000" strokeWidth="1.200" /></Svg>
      <div className="mt-auto flex h-[33px] w-full items-center justify-center border-b border-t border-[#e1dfdd]">
        <Svg w={20} h={20}><path d="M8 3.500 7 1.200l-2.500 1.300.5 2.300L3.500 6.500 1 10l2.500 3.500L5 15.200l-.5 2.300L7 18.800l1.500-2h3l1.500 2 2.500-1.300-.5-2.300 1.500-1.700L19 10l-2.500-3.500L15 4.800l.5-2.300L13 1.200l-1.500 2z" stroke={INK} strokeWidth="1.300" strokeLinejoin="round" /><circle cx="10" cy="10" r="3" stroke={INK} strokeWidth="1.300" /></Svg>
      </div>
    </div>
  );
}

function StatusBar() {
  return (
    <div className="flex h-[24px] items-center border-b border-black bg-[#f3f2f1] text-[12px] tracking-[-0.200px] text-[#484644]">
      <span className="ml-[4px] pt-[2px]">Page 4 of 4</span>
      <span className="ml-auto font-bold">-</span>
      <Svg w={100} h={11} className="ml-[4px]"><path d="M0 5.500h100M50.500 3v5" stroke="#605e5c" strokeWidth="1" /><rect x="31" y="0" width="4" height="11" fill="#605e5c" /></Svg>
      <Svg w={8} h={8} className="ml-[6px]"><path d="M4 0v8M0 4h8" stroke="#605e5c" strokeWidth="1.200" /></Svg>
      <span className="ml-[13px] w-[42px]">69%</span>
      <Svg w={16} h={12} className="mr-[18px]"><path d="M.6 .6h14.800v10.800H.6z" stroke="#605e5c" strokeWidth="1.200" /><path d="M3 5V3h2.500M10.500 3H13v2M3 7v2h2.500M10.500 9H13V7" stroke="#605e5c" /></Svg>
    </div>
  );
}

/* ---------- Taskbar ---------- */
function Cell({ children, active, bar, className = "" }) {
  return (
    <div className={"flex h-10 w-[49px] flex-col items-center px-px " + className}>
      <div className={"flex h-[38px] w-full items-center justify-center " + (active || "")}>{children}</div>
      <div className={"h-[2px] " + (bar || "")} />
    </div>
  );
}
const Badge = ({ x, y, n }) => (
  <>
    <circle cx={x} cy={y} r="8" fill="#33302d" fillOpacity=".88" stroke="#a5a3a1" />
    <text x={x} y={y + 4.300} textAnchor="middle" fontSize="12" fontWeight="600" fontFamily="Open Sans" fill="#fff">{n}</text>
  </>
);

function Taskbar() {
  return (
    <div className="flex h-[40px] items-start bg-[linear-gradient(90deg,#242322_0%,#2b2a28_30%,#3a342f_50%,#3f3830_66%,#332f2b_78%,#282726_100%)] text-white">
      <div className="flex h-10 w-12 items-center justify-center"><Svg w={16} h={16}><path d="M0 2.300 6.800 1.300V7.600H0zM7.600 1.200 16 0v7.600H7.600zM0 8.400h6.800v6.300L0 13.700zM7.600 8.400H16V16l-8.400-1.200z" fill="#fff" /></Svg></div>
      <div className="flex h-10 w-[288px] items-center border border-[#5d5d5c] bg-[#333231]">
        <Svg w={17} h={17} className="ml-[11px]"><circle cx="10.500" cy="6.300" r="5.500" stroke="#eee" strokeWidth="1.200" /><path d="M6.500 10.200.6 16.200" stroke="#eee" strokeWidth="1.200" /></Svg>
        <span className="ml-[11px] w-[178px] whitespace-nowrap text-[14px] tracking-[-0.050px] text-[#d8d8d8]">Type here to search</span>
        <Svg w={61} h={34}>
          <path d="M1 22 44 13l16 3v7L5 33 1 30z" fill="#8c3d18" />
          <path d="M1 22 44 12l16 4L5 26z" fill="#c8763a" />
          <path d="M5 26 60 16v7L5 33z" fill="#8f3a15" />
          <path d="M24 21l6-3 4 3-5 2z" fill="#f3cf72" />
          <path d="M4 10h7v3l-2 1v6l3 3H4l2-3v-6l-2-1zM16 3h6v3l-2 1v4h-3V7l-1-1z" fill="#c77234" />
          <path d="M2 13 16 8 50 1l1 3-34 9-13 4z" fill="#db8a4e" />
          <path d="M45 2l6-1 .5 3-6 1z" fill="#f0a060" />
          <path d="M33 9l9 9 8 1M30 11l6 9" stroke="#e0a070" strokeWidth="1.500" />
          <ellipse cx="14.500" cy="18" rx="5.500" ry="5" fill="#ecc28c" /><path d="M9 18h11v4H9z" fill="#d99a55" />
          <ellipse cx="7" cy="8" rx="4" ry="2" fill="#e8a063" /><ellipse cx="19" cy="2.500" rx="4" ry="1.800" fill="#e8a063" />
        </Svg>
      </div>
      <Cell><Svg w={16} h={16} className="mr-px"><path d="M0 1h2v2h8V1M0 15h2v-2h8v2M.6 5h10.400v6H.6zM14.500 0v4M14.500 9v7" stroke="#fff" strokeWidth="1.200" /><path d="M13 5h3v3h-3z" fill="#fff" /></Svg></Cell>
      <Cell className="ml-[1px]"><CopilotIcon size={22} id="ct" /></Cell>
      <Cell active="bg-[#4a4743]" bar="w-full bg-[#76b9ed]">
        <Svg w={22} h={19}><path d="M0 1h9l2 3H0z" fill="#e5a11a" /><path d="M0 3h22v16H0z" fill="#fcd462" /><path d="M4 19v-6q0-2 2-2h10q2 0 2 2v6h-4v-3H8v3z" fill="#3d93d6" /></Svg>
      </Cell>
      <Cell>
        <Svg w={36} h={28} className="ml-[8px]"><path d="M2 8 13 1l12 7v14H2z" fill="#0f5cab" /><path d="M4 7h19l-9.500 9z" fill="#f4f6f8" /><path d="M2 8.500 13.500 16 2 23z" fill="#37b7f3" /><path d="M25 8.500V23H2z" fill="#2aa3ec" /><Badge x={26.500} y={19} n="1" /></Svg>
      </Cell>
      <Cell>
        <Svg w={24} h={24}>
          <defs><linearGradient id="eg" x1="0" y1="0" x2="1" y2=".3"><stop stopColor="#25b5e8" /><stop offset=".6" stopColor="#3fcfa5" /><stop offset="1" stopColor="#77e05a" /></linearGradient></defs>
          <circle cx="12" cy="12" r="12" fill="#1279cf" />
          <path d="M0 11C1 4 6 0 12 0c7 0 12 5 12 10.500 0 4-3 6-6.500 6-3 0-4-1.200-3-2.500 2-4-1-7-5-7C5 7 1.500 9 0 11z" fill="url(#eg)" />
          <path d="M9.500 8.500C5 12 7 20 14 21.500c3 .5 6-.5 7.500-2.500-3 6-11 6.500-15.500 3C1 18 4 9 9.500 8.500z" fill="#0d5bb5" />
          <path d="M14 13.500c-1 1.500 0 3.200 3.500 3.200 2.500 0 4.500-.7 5.500-2-1 3-3 4.800-6 4.800-4 0-6-3.500-3-6z" fill="#3a3530" />
        </Svg>
      </Cell>
      <Cell bar="w-[40px] bg-[#76b9ed]">
        <Svg w={26} h={26} className="ml-px">
          <circle cx="12" cy="12.500" r="12" fill="#fbc116" />
          <path d="M1.600 6.500 A12 12 0 0 0 11 24.500L16 15z" fill="#25a04b" /><path d="M1.600 6.500A12 12 0 0 1 22.400 6.500H12z" fill="#e33b2e" />
          <circle cx="12" cy="12.500" r="5.800" fill="#fff" /><circle cx="12" cy="12.500" r="4.500" fill="#2b7de9" />
          <circle cx="18" cy="18.500" r="7.700" fill="#ea3c76" /><text x="18" y="21.500" textAnchor="middle" fontSize="10" fontFamily="Roboto" fill="#fff">p</text>
        </Svg>
      </Cell>
      <Cell bar="w-[40px] bg-[#76b9ed]">
        <Svg w={36} h={28} className="ml-[8px]">
          <path d="M2.500 25l1.600-6A11 11 0 1 1 8.500 23.500z" stroke="#2bd366" strokeWidth="2.600" />
          <path d="M9 8.500c1-1 2-1 2.500 0l1 2.300-1.200 1.700c1 2 2.500 3.200 4.500 4l1.500-1.500 2.700 1.500c.2 2-1.500 3-3.500 2.700-4.500-.8-8-4.500-8.500-8z" fill="#2bd366" />
          <Badge x={26.500} y={19} n="4" />
        </Svg>
      </Cell>
      <Cell bar="w-[40px] bg-[#76b9ed]">
        <Svg w={23} h={19}><path d="M0 0h23v19H0z" fill="#c8c8c8" /><path d="M1 3h21v15H1z" fill="#050505" /><text x="2" y="9" fontSize="5.500" fontFamily="Liberation Mono" fontWeight="700" fill="#eee">C:\_</text></Svg>
      </Cell>
      <Cell active="bg-[#6a6560]" bar="w-full bg-[#76b9ed]">
        <Svg w={20} h={24}><rect x="10.500" y="0" width="9" height="24" rx="1" fill="#e0a212" /><rect x="14" y="5" width="5.500" height="19" fill="#c98a12" /><rect x="5" y="6" width="9.500" height="18" rx="1" fill="#f0c433" /><rect x="0" y="12" width="9" height="12" rx="1" fill="#fbe37a" /></Svg>
      </Cell>
      <div className="ml-auto flex h-10 items-center pr-[4px]">
        <Svg w={25} h={24} className="mb-[1px]">
          <path d="M6 20a5 5 0 0 1 0-9 7 7 0 0 1 13 0 4.600 4.600 0 0 1 0 9z" fill="#86aef0" /><path d="M6 20a5 5 0 0 1-4.500-4h22A4.500 4.500 0 0 1 19 20z" fill="#a9c8fa" />
          <circle cx="18" cy="6.500" r="6.200" fill="#c42b1c" /><text x="18" y="9.500" textAnchor="middle" fontSize="8.500" fontWeight="700" fontFamily="Open Sans" fill="#fff">7</text>
        </Svg>
        <span className="ml-[8px] mt-px w-[38px] whitespace-nowrap text-[13px] tracking-[-0.150px]">10°C</span>
        <span className="mt-px w-[67px] text-[13px] tracking-[0.100px]">Cloudy</span>
        <Svg w={13} h={7}><path d="M.8 6.300 6.500 .8l5.700 5.500" stroke="#fff" strokeWidth="1.300" /></Svg>
        <Svg w={15} h={9} className="ml-[10px]"><path d="M.6 .6h12.300v7.800H.6zM14 3v3" stroke="#fff" strokeWidth="1.200" /><path d="M2 2h2v5H2z" fill="#fff" /></Svg>
        <Svg w={14} h={14} className="ml-[10px]"><path d="M1 9C2 4 6 1 12 .8M3.500 11C4.500 6.500 8 4 12.500 3.800M6 12.500C7 9 9 7.200 12.500 7M8.500 13c.5-2 2-3 4-3" stroke="#ccc" strokeWidth="1.100" /><circle cx="12" cy="12.500" r="1.500" fill="#fff" /></Svg>
        <Svg w={17} h={14} className="ml-[8px]"><path d="M.6 5h2.500L7 1.500v11L3.100 9H.6zM9 5c1 1 1 3 0 4M11.500 3.500c1.700 2 1.700 5 0 7" stroke="#fff" strokeWidth="1.200" /><path d="M14 2c2.500 3 2.500 7 0 10" stroke="#888" strokeWidth="1.100" /></Svg>
        <span className="ml-[9px] w-[35px] text-[12px] tracking-[-0.500px]">ENG</span>
        <div className="w-[60px] whitespace-nowrap text-center text-[11.500px] leading-[18px] tracking-[-0.350px]">23:19<br />27-04-2025</div>
        <Svg w={24} h={26} className="ml-[17px] mt-[1px]"><path d="M0 1h16v13H8l-4 3v-3H0z" fill="#fff" /><path d="M3 4.500h10M3 7.500h10M3 10.500h7" stroke="#333" /><Badge x={15.500} y={16.500} n="1" /></Svg>
        <div className="ml-[12px] h-10 w-px bg-[#666]" />
      </div>
    </div>
  );
}

export default function App() {
  return (
    <div className="h-[768px] w-[1366px] overflow-hidden bg-white font-['Open_Sans',sans-serif]">
      <TitleBar />
      <RibbonTabs />
      <Ribbon />
      <div className="flex h-[544px]">
        <LeftNav />
        <div className="w-[1292px] shrink-0">
          <Report />
          <PageTabs />
        </div>
        <RightPanes />
      </div>
      <StatusBar />
      <Taskbar />
    </div>
  );
}
